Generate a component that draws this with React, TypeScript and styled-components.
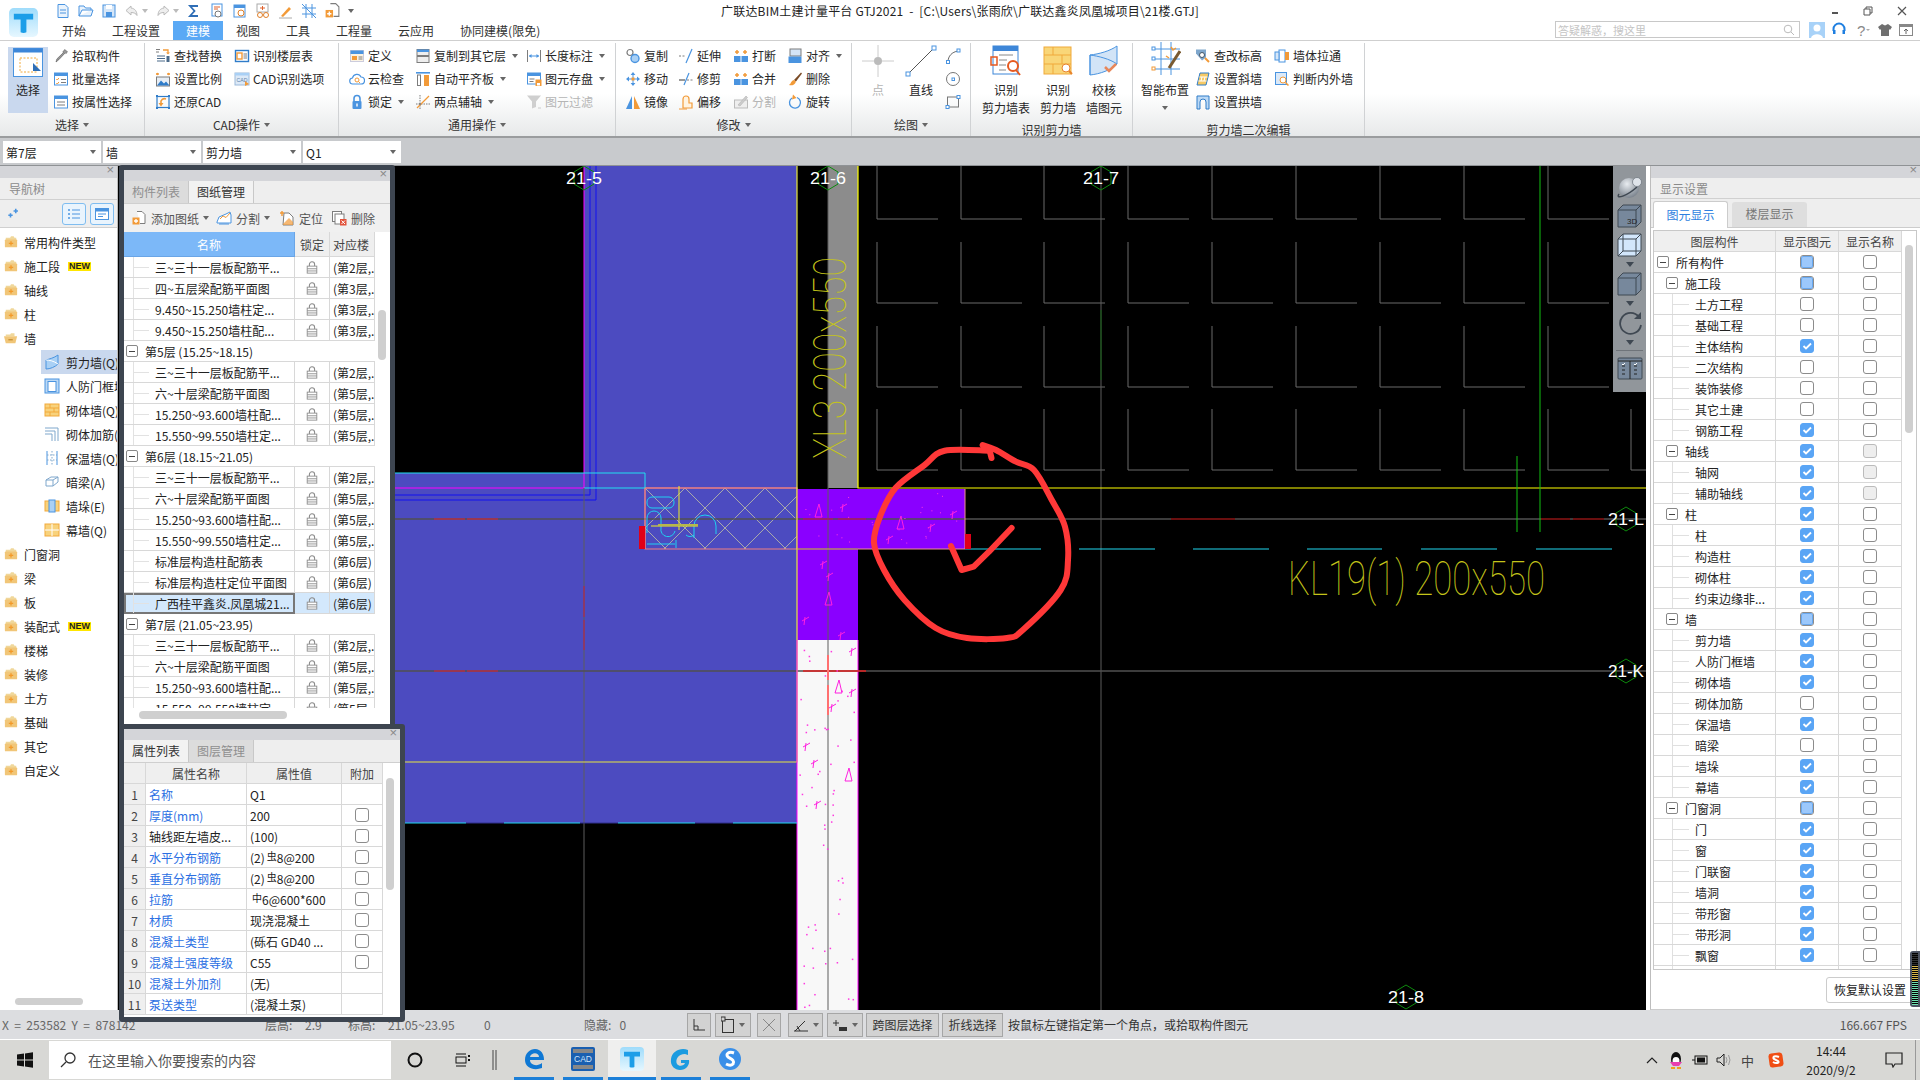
import React from "react";
import styled, { createGlobalStyle } from "styled-components";

const FONT = `"Noto Sans CJK SC", "Noto Sans", sans-serif`;

const Global = createGlobalStyle`
  html, body { margin: 0; padding: 0; width: 1920px; height: 1080px; overflow: hidden; background: #fff; }
  body { font-family: ${FONT}; font-size: 12px; color: #222; }
  * { box-sizing: border-box; }
`;

/* ---------- icons ---------- */
const B = "#4a94e0", O = "#f29a38", G = "#7d7d7d", LB = "#a9d0f5";
const ICONS: Record<string, React.ReactNode> = {
  pick: <path d="M12 1.5l2.5 2.5-1.6 1.6-.7-.7-6.4 6.8L3 14l.9-3.1 6.5-6.3-.7-.8z" fill="#999" stroke="#555" strokeWidth=".6" />,
  batch: <><rect x="1.5" y="2" width="13" height="12" fill="#fff" stroke={B} /><rect x="1.5" y="2" width="13" height="3" fill={B} /><path d="M3.3 8l1 1 1.6-2M3.3 12l1 1 1.6-2" stroke={O} fill="none" /><path d="M8 8.5h5M8 11.5h5" stroke={G} /></>,
  attr: <><rect x="1.5" y="2" width="13" height="12" fill="#fff" stroke={B} /><rect x="1.5" y="2" width="13" height="3" fill={B} /><path d="M4 8h8M4 11h8" stroke={G} /></>,
  find: <><path d="M1 1.5h4M1 4h3" stroke={G} /><path d="M8 2h5v3" stroke={O} fill="none" strokeWidth="1.3" /><path d="M11 4.5l2 2 2-2z" fill={O} /><path d="M2 8h8M2 10.5h8M2 13h8" stroke="#4a6a8a" strokeWidth="1.2" /><rect x="11.5" y="8" width="3" height="6" fill="#4a6a8a" /></>,
  floorT: <><rect x="1.5" y="2.5" width="13" height="11" fill="#fff" stroke="#2f7cc9" strokeWidth="1.4" /><rect x="3" y="5" width="5" height="6" fill="none" stroke={O} strokeWidth="1.4" /><path d="M9.5 6h3.5M9.5 8h3.5M9.5 10h3.5" stroke={G} /></>,
  scale: <><path d="M1 3h3M12 3h3" stroke={O} strokeWidth="1.5" /><path d="M1 3l2-1.5v3zM15 3l-2-1.5v3z" fill={O} /><rect x="1.5" y="6" width="13" height="9" fill="#e7eef6" stroke={G} /><path d="M2 14.5l4-5 3 3 2-2 3.5 4z" fill="#2f7cc9" /></>,
  cadOpt: <><rect x="1" y="2" width="14" height="12" fill="#dce9f7" stroke="#9bb9da" /><rect x="1" y="2" width="14" height="2.5" fill={LB} /><text x="8" y="11" fontSize="5.2" textAnchor="middle" fill="#5a7fa8" fontFamily="Liberation Sans">CAD</text><path d="M11 10l4 3-4 2z" fill={O} /></>,
  restore: <><rect x="2" y="2.5" width="12" height="11" fill="none" stroke="#2f7cc9" strokeWidth="1.2" /><path d="M1 1h2v2H1zM13 1h2v2h-2zM1 13h2v2H1zM13 13h2v2h-2z" fill="#2f7cc9" /><path d="M11 5a4 4 0 0 0-5 2l0 4" stroke={O} fill="none" strokeWidth="1.6" /><path d="M3.5 9h5l-2.5 3.5z" fill={O} /></>,
  define: <><rect x="1.5" y="2.5" width="13" height="11" fill="#fbf3e3" stroke="#ccd" /><rect x="1.5" y="2.5" width="13" height="3.5" fill={B} /><rect x="3" y="8" width="5" height="4" fill={O} /><path d="M9.5 9h4M9.5 11h4" stroke={G} /></>,
  cloud: <><path d="M4 13a3 3 0 0 1-.5-6A4.5 4.5 0 0 1 12 6a3.5 3.5 0 0 1 0 7z" fill="#fff" stroke={B} strokeWidth="1.2" /><circle cx="8" cy="9" r="2" fill="none" stroke={O} /><path d="M9.5 10.5l1.5 1.5" stroke={O} /></>,
  lock: <><path d="M5 7V4.5a3 3 0 0 1 6 0V7" fill="none" stroke={B} strokeWidth="1.6" /><rect x="3.5" y="7" width="9" height="8" rx="1" fill={B} /><rect x="7.3" y="9.5" width="1.4" height="3" fill="#fff" /></>,
  copyL: <><rect x="2" y="1.5" width="12" height="6" fill="#eee" stroke={G} /><rect x="2" y="1.5" width="12" height="2.5" fill={B} /><rect x="2" y="8.5" width="12" height="6" fill="#eee" stroke={G} /></>,
  level: <><rect x="1" y="1" width="14" height="1.6" fill={B} /><rect x="2.5" y="4" width="3" height="10.5" fill="#fff" stroke={G} /><rect x="9" y="4" width="5" height="11" fill={O} /></>,
  twoPt: <><path d="M5 1v14M1 10h14" stroke={G} strokeDasharray="1.5 1" /><path d="M2 14L14 2" stroke={O} strokeWidth="1.3" /><circle cx="5" cy="10" r="1" fill={G} /></>,
  dim: <><path d="M1.5 2v12M14.5 2v12" stroke={G} /><path d="M3 8h10" stroke={B} /><path d="M3 8l2.5-2v4zM13 8l-2.5-2v4z" fill={B} /></>,
  store: <><rect x="1.5" y="2" width="13" height="11" fill="#fff" stroke={B} /><rect x="1.5" y="2" width="13" height="3" fill={B} /><path d="M3.5 8h5M3.5 10.5h4" stroke={G} /><rect x="9.5" y="8.5" width="6" height="6.5" fill={O} /><rect x="11" y="12" width="3" height="2.5" fill="#fff" /></>,
  filter: <><path d="M1 1.5h14l-5 6V13l-4 1.5V7.5z" fill="#cfcfcf" /><path d="M12 14h3" stroke="#ccc" /></>,
  copy: <><circle cx="5" cy="4.5" r="3" fill="#fff" stroke={G} strokeWidth="1.2" /><circle cx="10" cy="10.5" r="4" fill={LB} stroke={B} strokeWidth="1.4" /></>,
  move: <><path d="M8 1l2.4 3H5.600zM8 15l2.4-3H5.600zM1 8l3-2.400v4.800zM15 8l-3-2.400v4.800z" fill={B} /><path d="M8 4v8M4 8h8" stroke={B} /><rect x="6.500" y="6.500" width="3" height="3" fill={O} /></>,
  mirror: <><path d="M7 2v13H1z" fill={B} /><path d="M9 2v13h6z" fill={O} /></>,
  extend: <><path d="M1 8h7" stroke={G} strokeDasharray="2 1.500" /><path d="M14 1L8 15" stroke={B} strokeWidth="1.200" /></>,
  trim: <><path d="M1 9h6" stroke="#333" /><path d="M9 9h6" stroke={G} strokeDasharray="2 1.500" /><path d="M11 2L6 14" stroke={B} strokeWidth="1.200" /></>,
  offset: <><path d="M5 14V5a3 3 0 0 1 6 0v4h3v5z" fill="#fff4e2" stroke={O} strokeWidth="1.200" /><path d="M1 15h8" stroke={O} /></>,
  breakI: <><rect x="1" y="8" width="6.500" height="6" fill={B} /><rect x="8.500" y="8" width="6.500" height="6" fill={B} /><path d="M4 2v4M2 4h4M12 2v4M10 4h4" stroke={O} strokeWidth="1.500" /></>,
  merge: <><rect x="1" y="8" width="14" height="6" fill={B} /><path d="M8 8v6" stroke="#cfe3f7" /><path d="M4 2v4M2 4h4M12 2v4M10 4h4" stroke={O} strokeWidth="1.500" /></>,
  split: <><rect x="1.500" y="6" width="13" height="8" fill="#eee" stroke="#bbb" /><path d="M5 11L13 2l1.500 1.500L7 12z" fill="#ccc" stroke="#aaa" strokeWidth=".5" /></>,
  align: <><rect x="3" y="1" width="11" height="7" fill="#d4e4f6" stroke={G} /><rect x="1.500" y="8.500" width="13" height="6.500" fill={B} /></>,
  del: <><path d="M14 1.500l-7 7.500 2 1.500 6-8z" fill="#7a4a25" /><path d="M7 9c-2 .5-3 2-3.500 3.500L2 14c2.500 1 6 0 7-3.500z" fill={O} /></>,
  rotate: <><path d="M10 3.500A5.500 5.500 0 1 1 5 4" fill="none" stroke={B} strokeWidth="1.300" /><path d="M6 .5L9.500 4 5 5.500z" fill={O} /></>,
  arc: <><path d="M3 14c0-6 4-10 10-11" fill="none" stroke="#666" /><rect x="1.500" y="12.500" width="3" height="3" fill="#fff" stroke={B} /><rect x="12" y="1" width="3" height="3" fill="#fff" stroke={B} /></>,
  circ: <><circle cx="8" cy="8" r="6.500" fill="#fff" stroke="#777" /><rect x="7" y="7" width="2.500" height="2.500" fill="#fff" stroke={B} /></>,
  rect2: <><rect x="2.500" y="3" width="11" height="10" fill="none" stroke="#777" /><rect x="1" y="11.500" width="3" height="3" fill="#fff" stroke={B} /><rect x="12" y="1.500" width="3" height="3" fill="#fff" stroke={B} /></>,
  changeH: <><path d="M1 1.500h10v8l-4 3-6-7z" fill="#7fa7cc" /><circle cx="7" cy="7" r="2.500" fill="#fff" stroke="#456" /><path d="M10 10l4 4" stroke={O} strokeWidth="2" /></>,
  slope: <><path d="M5 2h9l-3 12H2z" fill="#f6c964" stroke="#2f7cc9" /><path d="M4.500 6h8M3.500 10h8M7 6l-1 4M10 6l-1 4" stroke="#fff" /></>,
  archW: <><path d="M2 15V2h12v13h-3V8a3 3 0 0 0-6 0v7z" fill="#bcd9f5" stroke="#2f7cc9" /></>,
  pull: <><rect x="5" y="2" width="6" height="12" fill="#fff" stroke={B} /><rect x="1" y="4" width="4" height="8" fill="#d5e6f8" stroke={B} /><rect x="11" y="4" width="4" height="8" fill={O} /></>,
  inOut: <><rect x="1.500" y="1.500" width="11" height="12" fill="#dbe9f8" stroke={B} /><circle cx="9" cy="9" r="3" fill="#fff" stroke={O} /><path d="M11.500 11.500l3 3" stroke={O} strokeWidth="1.500" /></>,
  add: <><path d="M6 1.500h5l3 3v9H9" fill="#fff" stroke={G} /><rect x="1.500" y="7.500" width="7" height="7" fill={O} /><path d="M5 9v4M3 11h4" stroke="#fff" strokeWidth="1.300" /></>,
  cut: <><path d="M1 12l2-5 7-3 4-2 1 3v8H1z" fill="#fff" stroke={B} /><path d="M4 9l3-3 3 1.500L14 3" stroke={O} fill="none" /><path d="M3 14h10" stroke={B} /></>,
  locate: <><path d="M5 3h5l4 4v8H4z" fill="#fff" stroke={G} /><path d="M4 14l6-6 4 4v3H4z" fill={O} opacity=".7" /><path d="M3 1v5M1 3h4" stroke={O} strokeWidth="1.400" /></>,
  remove: <><rect x="1.500" y="1.500" width="9" height="10" fill="#fff" stroke={G} /><rect x="4" y="4" width="9" height="10" fill="#fff" stroke={G} /><rect x="9" y="9" width="6.500" height="6.500" fill="#e2533c" /><path d="M10.500 10.500l3.500 3.500M14 10.500L10.500 14" stroke="#fff" /></>,
  padlock: <><path d="M5 7V5a3 3 0 0 1 6 0v2" fill="none" stroke="#8a8a8a" strokeWidth="1.200" /><rect x="2.500" y="7" width="11" height="8" fill="#fff" stroke="#8a8a8a" /><path d="M2.500 10h11M2.500 12.500h11" stroke="#8a8a8a" /></>,
  folder: <><path d="M2 3h5l1-1.500h3L12 3h2v3H2z" fill="#f0d79a" /><rect x="1" y="5" width="14" height="9" rx="1" fill="#f1c678" /><path d="M8 7v5M5.500 9.500h5" stroke="#f39a2a" strokeWidth="1.500" /></>,
  folderOpen: <><path d="M2 4h5l1-1.500h4V6H2z" fill="#f0d79a" /><path d="M0 6h15l-2 8H2z" fill="#f1c678" /><path d="M5 10h5" stroke="#c58f34" strokeWidth="1.500" /></>,
  wall: <><path d="M2 6c3-1 8-2 12-5v9c-3 3-8 5-12 5z" fill={LB} stroke={B} /><path d="M2 6c3 0 8 1 12 4" fill="none" stroke="#fff" /></>,
  door: <><rect x="1" y="1" width="14" height="14" fill="#bcd9f5" stroke={B} /><rect x="4" y="3.500" width="8" height="10" fill="#fff" stroke={B} /></>,
  brick: <><rect x="1" y="2" width="14" height="12" fill="#f8d27c" stroke="#f2a93b" /><path d="M1 6h14M1 10h14M6 2v4M10 6v4M6 10v4" stroke="#f2a93b" /></>,
  rebar: <><path d="M1 2h13v13M1 5h10v10M1 8h7v7" fill="none" stroke="#7fa7cc" /></>,
  insul: <><path d="M3 1v14M13 1v14" stroke={B} /><path d="M8 1v14M3 5h10M3 10h10" stroke="#7fa7cc" strokeDasharray="1.500 1.500" /></>,
  beam: <><path d="M2 6l5-3h7v5l-5 4H2z" fill="#fff" stroke="#7fa7cc" /><path d="M2 6h7l5-3M9 6v6" fill="none" stroke="#7fa7cc" /></>,
  pier: <><rect x="1" y="3" width="14" height="10" fill="#f8d27c" stroke="#f2a93b" /><rect x="5" y="2" width="6" height="12" fill={LB} stroke={B} /></>,
  curtain: <><rect x="1" y="2" width="14" height="12" fill="#f8d27c" stroke="#f2a93b" /><path d="M1 8h14M8 2v12" stroke="#fff" /></>,
  spark: <><path d="M10 2v5M7.500 4.500h5M4 7v5M1.500 9.500h5" stroke={B} strokeWidth="1.800" /></>,
  listV: <><path d="M6 4h8M6 8h8M6 12h8" stroke={B} /><path d="M2 4h2M2 8h2M2 12h2" stroke={B} strokeWidth="1.600" /></>,
  formV: <><rect x="1.500" y="2.500" width="13" height="11" fill="#fff" stroke={B} /><rect x="1.500" y="2.500" width="13" height="3" fill={B} /><path d="M4 8h8M4 10.500h5" stroke={B} /></>,
};
const Svg = styled.svg`
  flex: none;
  display: block;
`;
const Ico = ({ n, s = 16 }: { n: string; s?: number }) => (
  <Svg width={s} height={s} viewBox="0 0 16 16">{ICONS[n]}</Svg>
);

/* ---------- layout ---------- */
const Screen = styled.div`
  width: 1920px;
  height: 1080px;
  display: flex;
  flex-direction: column;
  overflow: hidden;
  position: relative;
`;
const Header = styled.header`
  height: 41px;
  display: flex;
  background: #fff;
  border-bottom: 1px solid #cfcfcf;
  flex: none;
`;
const LogoCell = styled.div`
  width: 49px;
  padding: 8px 0 0 9px;
`;
const HeaderMain = styled.div`
  flex: 1;
  display: flex;
  flex-direction: column;
`;
const TopRow = styled.div`
  height: 21px;
  display: flex;
  align-items: center;
`;
const Quick = styled.div`
  width: 672px;
  display: flex;
  align-items: center;
  padding-left: 6px;
  gap: 7px;
`;
const Title = styled.div`
  flex: 1;
  font-size: 12px;
  color: #222;
  white-space: pre;
  letter-spacing: 0.2px;
`;
const WinBtns = styled.div`
  display: flex;
  align-items: center;
  gap: 24px;
  padding-right: 13px;
`;
const TabRow = styled.div`
  height: 19px;
  display: flex;
  align-items: stretch;
`;
const Tab = styled.div<{ $on?: boolean }>`
  padding: 0 13px;
  line-height: 19px;
  font-size: 12px;
  color: ${(p) => (p.$on ? "#fff" : "#333")};
  background: ${(p) => (p.$on ? "#5aa9f5" : "transparent")};
`;
const TabRight = styled.div`
  margin-left: auto;
  display: flex;
  align-items: center;
  padding: 0 7px 2px 0;
`;
const SearchBox = styled.div`
  width: 245px;
  height: 17px;
  border: 1px solid #c8c8c8;
  display: flex;
  align-items: center;
  justify-content: space-between;
  padding: 0 5px 0 2px;
  font-size: 11px;
  color: #c4c4c4;
  margin-right: 9px;
`;
const HeadIcons = styled.div`
  display: flex;
  align-items: center;
  gap: 6px;
`;
const Ribbon = styled.div`
  height: 97px;
  flex: none;
  display: flex;
  background: linear-gradient(#fff 55%, #e7e9ea);
  border-bottom: 2px solid #9a9c9e;
`;
const Group = styled.section<{ $w: number; $pl: number }>`
  width: ${(p) => p.$w}px;
  padding-left: ${(p) => p.$pl}px;
  border-right: 1px solid #d0d2d4;
  display: flex;
  flex-direction: column;
  flex: none;
  margin-top: 2px;
`;
const GroupBody = styled.div`
  flex: 1;
  display: flex;
  padding-top: 1px;
`;
const GroupLabel = styled.div<{ $shift?: number; $low?: boolean }>`
  height: 21px;
  margin-bottom: 1px;
  padding-top: ${(p) => (p.$low ? "4px" : "0")};
  display: flex;
  align-items: center;
  justify-content: center;
  gap: 4px;
  font-size: 12px;
  color: #333;
  margin-left: ${(p) => -(p.$shift ?? 0)}px;
`;
const Caret = styled.i<{ $c?: string; $s?: number }>`
  display: inline-block;
  border-left: ${(p) => p.$s ?? 3}px solid transparent;
  border-right: ${(p) => p.$s ?? 3}px solid transparent;
  border-top: ${(p) => (p.$s ?? 3) + 1}px solid ${(p) => p.$c ?? "#666"};
  flex: none;
`;
const QuickCaret = styled(Caret)`
  margin-left: -5px;
`;
const Col = styled.div<{ $w?: number; $ml?: number }>`
  width: ${(p) => (p.$w ? `${p.$w}px` : "auto")};
  margin-left: ${(p) => p.$ml ?? 0}px;
  display: flex;
  flex-direction: column;
  flex: none;
`;
const Item = styled.div<{ $off?: boolean }>`
  height: 23px;
  display: flex;
  align-items: center;
  gap: 3px;
  font-size: 12px;
  color: ${(p) => (p.$off ? "#b5b5b5" : "#262626")};
  white-space: nowrap;
  i { margin-left: 3px; }
`;
const Big = styled.div<{ $w: number; $on?: boolean; $off?: boolean; $ml?: number }>`
  width: ${(p) => p.$w}px;
  margin-left: ${(p) => p.$ml ?? 0}px;
  display: flex;
  flex-direction: column;
  align-items: center;
  background: ${(p) => (p.$on ? "#c9d8ee" : "transparent")};
  color: ${(p) => (p.$off ? "#b5b5b5" : "#262626")};
  height: ${(p) => (p.$on ? "66px" : "auto")};
  margin-top: ${(p) => (p.$on ? "3px" : "-1px")};
  flex: none;
`;
const BigIcon = styled.div<{ $h?: number }>`
  height: ${(p) => p.$h ?? 38}px;
  display: flex;
  align-items: flex-end;
  justify-content: center;
  padding-bottom: 4px;
`;
const BigText = styled.div`
  height: 18px;
  line-height: 17px;
  font-size: 12px;
  white-space: nowrap;
  text-align: center;
`;
const BigCaret = styled.div`
  height: 18px;
  display: flex;
  align-items: center;
  justify-content: center;
`;

const Toolbar = styled.div`
  height: 28px;
  flex: none;
  display: flex;
  gap: 2px;
  padding: 3px 0 0 3px;
  background: #c8cacd;
  border-bottom: 1px solid #8f9295;
`;
const Combo = styled.div`
  width: 98px;
  height: 22px;
  background: #fff;
  display: flex;
  align-items: center;
  justify-content: space-between;
  padding: 0 5px 0 3px;
  font-size: 12px;
`;

const Main = styled.main`
  height: 844px;
  display: flex;
  flex: none;
`;

/* ---------- nav ---------- */
const Nav = styled.nav`
  width: 118px;
  flex: none;
  background: #fff;
  border-right: 1px solid #bbb;
  display: flex;
  flex-direction: column;
  position: relative;
  overflow: hidden;
`;
const BarStrip = styled.div`
  height: 12px;
  background: #d4d5d9;
  position: relative;
  flex: none;
  &::after {
    content: "×";
    position: absolute;
    right: 3px;
    top: -4px;
    font: 13px/16px "Liberation Sans", sans-serif;
    color: #888;
  }
`;
const PaneTitle = styled.div<{ $h?: number }>`
  height: ${(p) => p.$h ?? 22}px;
  line-height: 21px;
  background: #eeeeee;
  color: #8a8a8a;
  font-size: 12px;
  padding-left: 9px;
  border-bottom: 1px solid #d0d0d0;
  flex: none;
`;
const NavTools = styled.div`
  height: 28px;
  background: #eee;
  border-bottom: 1px solid #d0d0d0;
  display: flex;
  align-items: center;
  gap: 4px;
  padding-left: 7px;
  flex: none;
`;
const NavToolBtn = styled.div<{ $first?: boolean }>`
  width: 24px;
  height: 22px;
  margin-left: ${(p) => (p.$first ? "37px" : "0")};
  border: 1px solid #7fbdf0;
  border-radius: 3px;
  background: #e9f4fd;
  display: flex;
  align-items: center;
  justify-content: center;
`;
const NavList = styled.div`
  padding-top: 2px;
`;
const NavRow = styled.div<{ $child?: boolean; $on?: boolean }>`
  height: 24px;
  display: flex;
  align-items: center;
  gap: 6px;
  padding-left: ${(p) => (p.$child ? "44px" : "4px")};
  white-space: nowrap;
  font-size: 12px;
  background: ${(p) => (p.$on ? "linear-gradient(90deg, transparent 41px, #c9d8ee 41px)" : "transparent")};
`;
const NewTag = styled.span`
  background: #ffe600;
  color: #222;
  font: 700 9px/9px "Liberation Sans", sans-serif;
  margin-left: 2px;
  padding: 0 1px;
`;
const NavScroll = styled.div`
  position: absolute;
  left: 15px;
  bottom: 5px;
  width: 68px;
  height: 7px;
  border-radius: 4px;
  background: #cfcfcf;
`;

/* ---------- workspace ---------- */
const Workspace = styled.div`
  width: 1528px;
  flex: none;
  position: relative;
  background: #000;
`;
const CanvasSvg = styled.svg`
  display: block;
  width: 1528px;
  height: 844px;
`;
const Floating = styled.div<{ $l: number; $t: number; $w: number; $h: number }>`
  position: absolute;
  left: ${(p) => p.$l}px;
  top: ${(p) => p.$t}px;
  width: ${(p) => p.$w}px;
  height: ${(p) => p.$h}px;
  border: 5px solid #3d4550;
  border-radius: 3px;
  background: #fff;
  display: flex;
  flex-direction: column;
  z-index: 3;
`;
const PanelBar = styled(BarStrip)`
  height: 11px;
`;
const PanelTabs = styled.div`
  height: 23px;
  background: #eee;
  display: flex;
  border-bottom: 1px solid #cfcfcf;
  flex: none;
`;
const PanelTab = styled.div<{ $on?: boolean }>`
  width: 65px;
  text-align: center;
  line-height: 22px;
  font-size: 12px;
  color: ${(p) => (p.$on ? "#333" : "#8f8f8f")};
  background: ${(p) => (p.$on ? "#f2f2f2" : "#dcdcdc")};
  border-right: 1px solid #c8c8c8;
`;
const PanelTools = styled.div`
  height: 28px;
  background: #f0f0f0;
  display: flex;
  align-items: center;
  color: #555;
  font-size: 12px;
  padding-left: 7px;
  flex: none;
`;
const PanelTool = styled.div<{ $w: number }>`
  width: ${(p) => p.$w}px;
  display: flex;
  align-items: center;
  gap: 4px;
  flex: none;
  white-space: nowrap;
`;
const TableArea = styled.div<{ $h: number }>`
  height: ${(p) => p.$h}px;
  display: flex;
  flex: none;
  overflow: hidden;
`;
const TableCol = styled.div<{ $w: number }>`
  width: ${(p) => p.$w}px;
  flex: none;
  overflow: hidden;
`;
const Track = styled.div<{ $pt: number; $h: number }>`
  flex: 1;
  padding: ${(p) => p.$pt}px 0 0 3px;
  &::after {
    content: "";
    display: block;
    width: 8px;
    height: ${(p) => p.$h}px;
    border-radius: 4px;
    background: #cfcfcf;
  }
`;
const Row = styled.div<{ $cols: string; $h?: number; $bg?: string }>`
  display: grid;
  grid-template-columns: ${(p) => p.$cols};
  height: ${(p) => p.$h ?? 21}px;
  background: ${(p) => p.$bg ?? "#fff"};
  font-size: 12px;
  color: #222;
  white-space: nowrap;
`;
const Cell = styled.div<{ $c?: boolean; $link?: boolean; $off?: boolean; $head?: boolean; $sel?: boolean }>`
  display: flex;
  align-items: center;
  justify-content: ${(p) => (p.$c ? "center" : "flex-start")};
  padding: ${(p) => (p.$c ? "0" : "0 3px")};
  overflow: hidden;
  border-right: 1px solid #d8d8d8;
  border-bottom: 1px solid #d8d8d8;
  color: ${(p) => (p.$link ? "#2b6fe3" : p.$head ? "#444" : "#222")};
  background: ${(p) => (p.$head ? "#efefef" : p.$sel ? "#d3e8fc" : "transparent")};
`;
const HeadBlue = styled(Cell)`
  background: #7cb8f8;
  color: #fff;
  border-color: #6aa5e6;
`;
const NameCell = styled(Cell)`
  padding-left: 31px;
  position: relative;
  &::before {
    content: "";
    position: absolute;
    left: 9px;
    top: 10px;
    width: 16px;
    border-top: 1px solid #e2e2e2;
  }
  &::after {
    content: "";
    position: absolute;
    left: 9px;
    top: 0;
    height: 100%;
    border-left: 1px solid #e2e2e2;
  }
`;
const SelName = styled(NameCell)`
  outline: 2px solid #777;
  outline-offset: -2px;
  background: #d3e8fc;
`;
const GroupCell = styled.div`
  grid-column: 1 / -1;
  display: flex;
  align-items: center;
  gap: 7px;
  padding-left: 2px;
  border-bottom: 1px solid #d8d8d8;
`;
const Minus = styled.span`
  width: 12px;
  height: 12px;
  border: 1px solid #888;
  border-radius: 2px;
  background: #fff;
  display: inline-flex;
  align-items: center;
  justify-content: center;
  flex: none;
  position: relative;
  z-index: 1;
  &::after {
    content: "";
    width: 6px;
    border-top: 1px solid #444;
  }
`;
const HScroll = styled.div`
  width: 148px;
  height: 8px;
  border-radius: 4px;
  background: #cfcfcf;
  margin: 3px 0 0 15px;
`;
const Rebar = styled.span`
  font-size: 10px;
  vertical-align: 3px;
  margin: 0 0 0 2px;
`;
const Box = styled.span<{ $state?: string }>`
  width: 14px;
  height: 14px;
  border-radius: 3px;
  display: inline-flex;
  align-items: center;
  justify-content: center;
  border: 1px solid ${(p) => (p.$state === "on" ? "#5aa5f5" : p.$state === "dis" ? "#bbb" : "#8c8c8c")};
  background: ${(p) => (p.$state === "on" ? "#5aa5f5" : p.$state === "dis" ? "#eeeeee" : "#fff")};
  flex: none;
  &::after {
    content: "";
    display: ${(p) => (p.$state === "half" ? "block" : "none")};
    width: 10px;
    height: 10px;
    border-radius: 2px;
    background: #9cc8fb;
    border: 1px solid #6aa9ef;
  }
`;
const Check = () => (
  <svg width="10" height="10" viewBox="0 0 10 10"><path d="M1.500 5l2.500 2.500 5-5" fill="none" stroke="#fff" strokeWidth="1.800" /></svg>
);
const CheckBox = ({ s }: { s?: string }) => <Box $state={s}>{s === "on" && <Check />}</Box>;

const ToolBox = styled.aside`
  position: absolute;
  right: 0;
  top: 0;
  width: 33px;
  height: 226px;
  background: #91969b;
  display: flex;
  flex-direction: column;
  align-items: center;
  padding-top: 9px;
  gap: 5px;
  z-index: 2;
`;
const ToolDivider = styled.div`
  width: 27px;
  border-top: 1px solid #6f747a;
`;

/* ---------- right ---------- */
const Right = styled.aside`
  width: 274px;
  flex: none;
  background: #fff;
  border-left: 4px solid #fff;
  display: flex;
  flex-direction: column;
  position: relative;
`;
const RightInner = styled.div`
  flex: 1;
  border-left: 1px solid #bdbdbd;
  border-bottom: 1px solid #ccc;
  display: flex;
  flex-direction: column;
`;
const DispTabs = styled.div`
  height: 29px;
  background: #eee;
  display: flex;
  align-items: flex-end;
  padding-left: 2px;
  gap: 4px;
  border-bottom: 1px solid #ccc;
  flex: none;
`;
const DispTab = styled.div<{ $on?: boolean }>`
  width: 75px;
  height: ${(p) => (p.$on ? "27px" : "25px")};
  line-height: ${(p) => (p.$on ? "26px" : "24px")};
  text-align: center;
  font-size: 12px;
  border-radius: 3px 3px 0 0;
  color: ${(p) => (p.$on ? "#2e7fe0" : "#777")};
  background: ${(p) => (p.$on ? "#fff" : "#dedede")};
  margin-bottom: ${(p) => (p.$on ? "-1px" : "0")};
  border: ${(p) => (p.$on ? "1px solid #ccc" : "none")};
  border-bottom: none;
`;
const DispWrap = styled.div`
  margin: 2px 0 0 2px;
  width: 264px;
  height: 740px;
  border: 1px solid #c8c8c8;
  display: flex;
  overflow: hidden;
  flex: none;
`;
const TreeCell = styled(Cell)<{ $lv: number }>`
  padding-left: ${(p) => (p.$lv === 0 ? 3 : p.$lv === 1 ? 12 : 41)}px;
  gap: 7px;
  position: relative;
  &::before {
    content: "";
    display: ${(p) => (p.$lv === 2 ? "block" : "none")};
    position: absolute;
    left: 18px;
    top: 10px;
    width: 17px;
    border-top: 1px solid #e0e0e0;
  }
  &::after {
    content: "";
    display: ${(p) => (p.$lv === 2 ? "block" : "none")};
    position: absolute;
    left: 18px;
    top: 0;
    height: 100%;
    border-left: 1px solid #e0e0e0;
  }
`;
const DispFoot = styled.div`
  flex: 1;
  display: flex;
  justify-content: flex-end;
  padding: 7px 6px 0 0;
`;
const ResetBtn = styled.div`
  width: 88px;
  height: 26px;
  line-height: 24px;
  text-align: center;
  background: #fff;
  border: 1px solid #ccc;
  border-radius: 3px;
  font-size: 12px;
`;
const Meter = styled.div`
  position: absolute;
  right: 0;
  bottom: 3px;
  width: 10px;
  height: 56px;
  background: #4d5463;
  border-radius: 3px 0 0 3px;
  padding: 2px;
  &::after {
    content: "";
    display: block;
    height: 100%;
    background: repeating-linear-gradient(#000 0 1px, transparent 1px 2px),
      linear-gradient(#333 0 25%, #d6b64a 25% 55%, #6ee0b0 55%);
  }
`;

/* ---------- status & taskbar ---------- */
const Status = styled.footer`
  height: 30px;
  flex: none;
  display: flex;
  align-items: center;
  background: #dcdde0;
  border-bottom: 1px solid #fff;
  font-size: 12px;
  color: #666;
  white-space: pre;
`;
const StatusText = styled.span<{ $w: number; $ml?: number; $dark?: boolean }>`
  width: ${(p) => p.$w}px;
  margin-left: ${(p) => p.$ml ?? 0}px;
  flex: none;
  color: ${(p) => (p.$dark ? "#333" : "#666")};
`;
const StatusBtn = styled.div<{ $w: number; $ml: number }>`
  width: ${(p) => p.$w}px;
  margin-left: ${(p) => p.$ml}px;
  height: 24px;
  flex: none;
  border: 1px solid #a6a6a6;
  background: #d2d2d2;
  display: flex;
  align-items: center;
  justify-content: center;
  gap: 4px;
  font-size: 12px;
  color: #333;
`;
const Fps = styled.span`
  margin-left: auto;
  padding-right: 13px;
  color: #555;
`;
const Taskbar = styled.div`
  height: 40px;
  flex: none;
  background: #d8d8d5;
  display: flex;
  align-items: center;
  position: relative;
`;
const WinStart = styled.div`
  width: 49px;
  display: flex;
  justify-content: center;
  flex: none;
`;
const TaskSearch = styled.div`
  width: 342px;
  height: 38px;
  background: #fff;
  display: flex;
  align-items: center;
  gap: 12px;
  padding-left: 11px;
  font-size: 14px;
  color: #555;
  flex: none;
`;
const TaskSlot = styled.div<{ $w: number; $ml?: number; $run?: boolean; $hot?: boolean }>`
  width: ${(p) => p.$w}px;
  margin-left: ${(p) => p.$ml ?? 0}px;
  height: 40px;
  flex: none;
  display: flex;
  align-items: center;
  justify-content: center;
  background: ${(p) => (p.$hot ? "#efefee" : "transparent")};
  border-bottom: ${(p) => (p.$run ? "3px solid #1c7fd8" : "none")};
`;
const Tray = styled.div`
  margin-left: auto;
  display: flex;
  align-items: center;
  height: 100%;
`;
const TrayIcon = styled.div<{ $w: number }>`
  width: ${(p) => p.$w}px;
  display: flex;
  justify-content: center;
  font-size: 13px;
  color: #444;
`;
const Clock = styled.div`
  width: 76px;
  text-align: center;
  font-size: 12px;
  line-height: 19px;
  color: #222;
`;
const Notify = styled.div`
  width: 44px;
  display: flex;
  justify-content: center;
  border-right: 1px solid #999;
  height: 100%;
  align-items: center;
`;

/* ---------- data ---------- */
const cols1 = "171px 35px 45px";
type Dr = { g?: string; n?: string; f?: string; sel?: boolean };
const r2 = "三~三十一层板配筋平...";
const r6 = "六~十层梁配筋平面图";
const r15a = "15.250~93.600墙柱配...";
const r15b = "15.550~99.550墙柱定...";
const draw: Dr[] = [
  { n: r2, f: "(第2层,.." },
  { n: "四~五层梁配筋平面图", f: "(第3层,.." },
  { n: "9.450~15.250墙柱定...", f: "(第3层,.." },
  { n: "9.450~15.250墙柱配...", f: "(第3层,.." },
  { g: "第5层 (15.25~18.15)" },
  { n: r2, f: "(第2层,.." },
  { n: r6, f: "(第5层,.." },
  { n: r15a, f: "(第5层,.." },
  { n: r15b, f: "(第5层,.." },
  { g: "第6层 (18.15~21.05)" },
  { n: r2, f: "(第2层,.." },
  { n: r6, f: "(第5层,.." },
  { n: r15a, f: "(第5层,.." },
  { n: r15b, f: "(第5层,.." },
  { n: "标准层构造柱配筋表", f: "(第6层)" },
  { n: "标准层构造柱定位平面图", f: "(第6层)" },
  { n: "广西桂平鑫炎.凤凰城21...", f: "(第6层)", sel: true },
  { g: "第7层 (21.05~23.95)" },
  { n: r2, f: "(第2层,.." },
  { n: r6, f: "(第5层,.." },
  { n: r15a, f: "(第5层,.." },
  { n: r15b, f: "(第5层,.." },
];
const props: { n: string; v: React.ReactNode; link: boolean; box: boolean }[] = [
  { n: "名称", v: "Q1", link: true, box: false },
  { n: "厚度(mm)", v: "200", link: true, box: true },
  { n: "轴线距左墙皮...", v: "(100)", link: false, box: true },
  { n: "水平分布钢筋", v: <span>(2)<Rebar>虫</Rebar>8@200</span>, link: true, box: true },
  { n: "垂直分布钢筋", v: <span>(2)<Rebar>虫</Rebar>8@200</span>, link: true, box: true },
  { n: "拉筋", v: <span><Rebar>中</Rebar>6@600*600</span>, link: true, box: true },
  { n: "材质", v: "现浇混凝土", link: true, box: true },
  { n: "混凝土类型", v: "(砾石 GD40 ...", link: true, box: true },
  { n: "混凝土强度等级", v: "C55", link: true, box: true },
  { n: "混凝土外加剂", v: "(无)", link: true, box: false },
  { n: "泵送类型", v: "(混凝土泵)", link: true, box: false },
];
const disp: [string, number, string, string?][] = [
  ["所有构件", 0, "half"], ["施工段", 1, "half"], ["土方工程", 2, ""], ["基础工程", 2, ""], ["主体结构", 2, "on"],
  ["二次结构", 2, ""], ["装饰装修", 2, ""], ["其它土建", 2, ""], ["钢筋工程", 2, "on"],
  ["轴线", 1, "on", "dis"], ["轴网", 2, "on", "dis"], ["辅助轴线", 2, "on", "dis"],
  ["柱", 1, "on"], ["柱", 2, "on"], ["构造柱", 2, "on"], ["砌体柱", 2, "on"], ["约束边缘非...", 2, "on"],
  ["墙", 1, "half"], ["剪力墙", 2, "on"], ["人防门框墙", 2, "on"], ["砌体墙", 2, "on"], ["砌体加筋", 2, ""],
  ["保温墙", 2, "on"], ["暗梁", 2, ""], ["墙垛", 2, "on"], ["幕墙", 2, "on"],
  ["门窗洞", 1, "half"], ["门", 2, "on"], ["窗", 2, "on"], ["门联窗", 2, "on"], ["墙洞", 2, "on"], ["带形窗", 2, "on"],
  ["带形洞", 2, "on"], ["飘窗", 2, "on"], ["", 2, ""],
];
const navItems: { t: string; open?: boolean; isNew?: boolean; child?: boolean; ic?: string; on?: boolean }[] = [
  { t: "常用构件类型" }, { t: "施工段", isNew: true }, { t: "轴线" }, { t: "柱" }, { t: "墙", open: true },
  { t: "剪力墙(Q)", child: true, ic: "wall", on: true }, { t: "人防门框墙(Q)", child: true, ic: "door" },
  { t: "砌体墙(Q)", child: true, ic: "brick" }, { t: "砌体加筋(L)", child: true, ic: "rebar" },
  { t: "保温墙(Q)", child: true, ic: "insul" }, { t: "暗梁(A)", child: true, ic: "beam" },
  { t: "墙垛(E)", child: true, ic: "pier" }, { t: "幕墙(Q)", child: true, ic: "curtain" },
  { t: "门窗洞" }, { t: "梁" }, { t: "板" }, { t: "装配式", isNew: true }, { t: "楼梯" }, { t: "装修" },
  { t: "土方" }, { t: "基础" }, { t: "其它" }, { t: "自定义" },
];

/* ---------- drawing data ---------- */
const Lx = [877, 961, 1044, 1128, 1212, 1296, 1380, 1464, 1548, 1631];
const Ly: [number, number][] = [[150, 219], [242, 303], [326, 387], [409, 470]];
const lPath = Ly.flatMap(([a, b]) => Lx.map((x) => `M${x} ${a}V${b}H${x + 61}`)).join("");
const rnd = (seed: number) => {
  let s = seed;
  return () => {
    s = (s * 9301 + 49297) % 233280;
    return s / 233280;
  };
};
const dots = (seed: number, n: number, x: number, y: number, w: number, h: number) => {
  const r = rnd(seed);
  return Array.from({ length: n }, () => [x + r() * w, y + r() * h]);
};
const whiteDots = dots(7, 60, 799, 642, 57, 368);
const purpleDots = dots(11, 26, 799, 491, 165, 57);
const tris: [number, number][] = [[819, 511], [901, 523], [829, 599], [839, 687], [849, 775]];
const ticks: [number, number][] = [[843, 508], [953, 515], [931, 528], [889, 540], [823, 565], [829, 577], [805, 621], [841, 636], [852, 652], [852, 693], [832, 708], [806, 747], [814, 764], [817, 805]];
const hexPts = (x: number, y: number) =>
  `${x},${y - 12} ${x + 10},${y - 6} ${x + 10},${y + 6} ${x},${y + 12} ${x - 10},${y + 6} ${x - 10},${y - 6}`;
const AXES: [string, number, number][] = [["21-5", 584, 178], ["21-6", 828, 178], ["21-7", 1101, 178], ["21-L", 1626, 519], ["21-K", 1626, 671], ["21-8", 1406, 997]];
const cyanDash = [[965, 1041], [1079, 1155], [1193, 1269], [1307, 1382], [1421, 1497], [1536, 1612]];
const redDash: [number, number, number, string][] = [
  [434, 465, 519, "#b0304a"], [467, 498, 519, "#b0304a"], [803, 833, 519, "#b01070"], [838, 866, 519, "#b01070"],
  [1171, 1204, 519, "#7a0000"], [1204, 1235, 519, "#7a0000"], [1541, 1570, 519, "#7a0000"], [1573, 1604, 519, "#7a0000"],
  [434, 465, 671, "#b0304a"], [467, 498, 671, "#b0304a"], [803, 866, 671, "#e02020"],
];
const smooth = (pts: [number, number][]) => {
  let d = `M${pts[0][0]} ${pts[0][1]}`;
  for (let i = 0; i < pts.length - 1; i++) {
    const p0 = pts[Math.max(i - 1, 0)], p1 = pts[i], p2 = pts[i + 1], p3 = pts[Math.min(i + 2, pts.length - 1)];
    d += `C${p1[0] + (p2[0] - p0[0]) / 6} ${p1[1] + (p2[1] - p0[1]) / 6} ${p2[0] - (p3[0] - p1[0]) / 6} ${p2[1] - (p3[1] - p1[1]) / 6} ${p2[0]} ${p2[1]}`;
  }
  return d;
};
const ringPath = smooth([
  [982.6, 445], [996, 450], [1016, 461.7], [1034, 470], [1051.8, 500], [1065, 526.7], [1068, 560], [1060.7, 590],
  [1022.8, 630], [1007, 638], [967, 638], [935.7, 628], [904.5, 600], [884, 570], [874, 543], [880, 516.7],
  [895.5, 488], [924.6, 465], [944.6, 450.7], [989, 450.7],
]);

const Canvas = () => (
  <CanvasSvg viewBox="118 166 1528 844">
    <defs>
      <pattern id="hatch" x="645" y="488" width="40" height="40" patternUnits="userSpaceOnUse">
        <path d="M0 0L40 40M40 0L0 40" stroke="#a9a9a9" strokeWidth="1" />
      </pattern>
    </defs>
    <rect x="118" y="166" width="1528" height="844" fill="#000" />
    <rect x="395" y="166" width="402" height="657" fill="#4c4bc0" />
    <rect x="395" y="166" width="189" height="307" fill="#000" />
    <rect x="828" y="166" width="30" height="322" fill="#8c8c8c" />
    <rect x="645" y="488" width="152" height="61" fill="url(#hatch)" stroke="#f08080" />
    <rect x="797" y="489" width="168" height="60" fill="#8a00ff" />
    <rect x="797" y="549" width="61" height="91" fill="#8a00ff" />
    <rect x="797" y="640" width="61" height="370" fill="#f8f8f8" />
    <path d={lPath} fill="none" stroke="#6a6a6a" strokeWidth="1" />
    <path d="M584 166V488M395 488H584" fill="none" stroke="#ff00ff" />
    <path d="M590 166V495H395M596 166V500H395" fill="none" stroke="#1010f0" />
    <path d="M395 473H645V488M584 488H645" fill="none" stroke="#20e0f0" />
    <path d="M584 488V1010M1101 166V1010M828 166V1010" fill="none" stroke="#5c5c5c" />
    <path d="M828 640V1010" stroke="#aaa" />
    <path d="M395 519H1646M395 671H1646" stroke="#505050" strokeWidth="1.500" />
    <path d="M1101 310V380" stroke="#0a5a0a" />
    <path d="M645 549V488M797 488H645" stroke="#f08080" fill="none" />
    <path d="M858 166V488H1646" fill="none" stroke="#ffff00" strokeWidth="1.200" />
    <path d="M797 166V762H395" fill="none" stroke="#e6e640" strokeWidth="1.200" />
    <path d="M858 549H965V489" fill="none" stroke="#f09090" />
    <path d="M797 549H858" stroke="#c8c820" />
    <path d="M797 640V1010M858 640V1010" stroke="#ff00ff" />
    <path d="M1540 166V532M1517 456V532" stroke="#12c012" />
    {redDash.map(([a, b, y, c], i) => <path key={i} d={`M${a} ${y}H${b}`} stroke={c} strokeWidth="1.500" />)}
    <path d="M584 586V617M584 620V650" stroke="#c02040" />
    <path d="M828 655V680M828 685V715" stroke="#ff7070" strokeWidth="2" />
    <path d="M405 823H466M504 823H580M618 823H695M733 823H797" stroke="#20d8f0" />
    <path d="M466 823H504M580 823H618M695 823H733" stroke="#30308c" />
    {cyanDash.map(([a, b]) => <path key={a} d={`M${a} 549H${b}`} stroke="#20d8f0" />)}
    <g fill="none" stroke="#20d0f0">
      <rect x="647" y="497" width="27" height="11" rx="5" />
      <path d="M647 533V518a7 7 0 0 1 14 0V528a7 7 0 0 0 14 3" />
      <path d="M694 538V526a6 6 0 0 1 22 0V534" />
      <path d="M694 535a6 6 0 0 1-8 0M647 544H675M676 540V548" />
    </g>
    <path d="M679 486V530M651 526H698" stroke="#f0f020" />
    <path d="M658 525H698" stroke="#b8b84a" strokeWidth="2" />
    <rect x="639" y="526" width="6" height="23" fill="#e00018" />
    <rect x="965" y="534" width="6" height="15" fill="#e00018" />
    <g fill="#ff38e0">
      {whiteDots.map(([x, y], i) => <rect key={i} x={x} y={y} width="1.500" height="1.500" />)}
      {purpleDots.map(([x, y], i) => <rect key={i} x={x} y={y} width="1" height="1" />)}
    </g>
    <g fill="none" stroke="#ff20e0">
      {tris.map(([x, y], i) => <path key={i} d={`M${x} ${y - 7}l3 13h-7z`} />)}
      {ticks.map(([x, y], i) => <path key={i} d={`M${x - 3} ${y}l7-4M${x} ${y - 4}l-1 8`} />)}
    </g>
    <text x="0" y="0" transform="translate(846 459) rotate(-90)" fontFamily="Roboto, sans-serif" fontWeight="100" fontSize="46" fill="#c4c41a" textLength="202" lengthAdjust="spacingAndGlyphs">XL3 200x550</text>
    <text x="1288" y="595" fontFamily="Roboto, sans-serif" fontWeight="100" fontSize="48" fill="#c4c41a" textLength="257" lengthAdjust="spacingAndGlyphs">KL19(1) 200x550</text>
    {AXES.map(([t, x, y]) => (
      <g key={t}>
        <polygon points={hexPts(x, y)} fill="none" stroke="#0d8a0d" />
        <text x={x} y={y + 6} textAnchor="middle" fontFamily="Liberation Sans, sans-serif" fontSize="17" fill="#fff" textLength="36" lengthAdjust="spacingAndGlyphs">{t}</text>
      </g>
    ))}
    <path d={ringPath} fill="none" stroke="#ff3838" strokeWidth="6" strokeLinecap="round" strokeLinejoin="round" />
    <path d="M991.500 458L989 448" fill="none" stroke="#ff3838" strokeWidth="6" strokeLinecap="round" />
    <path d="M951 546L961.600 570L973.700 566.700L989 551.700L1011.600 528" fill="none" stroke="#ff3838" strokeWidth="6" strokeLinecap="round" strokeLinejoin="round" />
  </CanvasSvg>
);

const CubeIc = ({ inner }: { inner?: React.ReactNode }) => (
  <svg width="26" height="24" viewBox="0 0 26 24">
    <path d="M1 6l5-5h18v17l-5 5H1z" fill="#77889c" stroke="#3f4852" />
    <path d="M1 6h18v17M19 6l5-5" fill="none" stroke="#3f4852" />
    {inner}
  </svg>
);

const BigSelect = () => (
  <svg width="30" height="29" viewBox="0 0 30 29">
    <rect x=".5" y=".5" width="29" height="28" fill="#fff" stroke="#4a94e0" />
    <rect x=".5" y=".5" width="29" height="4" fill="#3d86d8" />
    <rect x="7" y="10" width="17" height="14" fill="none" stroke="#f2a93b" strokeDasharray="2 1.500" />
    <path d="M20 15l8 8h-8z" fill="#2f6eb6" />
  </svg>
);
const BigPoint = () => (
  <svg width="32" height="32" viewBox="0 0 32 32"><path d="M16 0V12M16 20V32M0 16H12M20 16H32" stroke="#ccc" /><circle cx="16" cy="16" r="4" fill="#bbb" /></svg>
);
const BigLine = () => (
  <svg width="32" height="32" viewBox="0 0 32 32"><path d="M3 29L29 3" stroke="#555" /><rect x="27" y="1" width="4" height="4" fill="#fff" stroke="#4a94e0" /><rect x="1" y="27" width="4" height="4" fill="#fff" stroke="#4a94e0" /></svg>
);
const BigTable = () => (
  <svg width="32" height="32" viewBox="0 0 32 32"><rect x="3" y="1" width="25" height="28" fill="#fff" stroke="#3d86d8" /><rect x="3" y="1" width="25" height="5" fill="#3d86d8" /><path d="M9 10h14M9 15h8M9 20h7M9 25h7" stroke="#888" /><rect x="1" y="12" width="6" height="8" fill="none" stroke="#e65a20" strokeWidth="1.500" /><circle cx="23" cy="21" r="5" fill="#fff" stroke="#e65a20" strokeWidth="2" /><path d="M26 25l4 5" stroke="#e65a20" strokeWidth="2" /></svg>
);
const BigBrick = () => (
  <svg width="32" height="32" viewBox="0 0 32 32"><rect x="2" y="2" width="27" height="27" fill="#f9d678" stroke="#f0a93a" /><path d="M2 10h27M2 19h27M11 2v8M20 10v9M11 19v10" stroke="#f0a93a" /><circle cx="24" cy="23" r="4" fill="#fff" stroke="#e8822a" /><path d="M27 26l3 3" stroke="#e8822a" strokeWidth="2" /></svg>
);
const BigCheck = () => (
  <svg width="32" height="32" viewBox="0 0 32 32"><path d="M2 10c9-1 20-4 27-9v18c-6 6-17 10-27 11z" fill="#d2e4f7" stroke="#4a94e0" /><path d="M2 10c8 1 20 4 27 9M2 10v20" fill="none" stroke="#4a94e0" /><path d="M17 22l4 4 7-7" fill="none" stroke="#e8875a" strokeWidth="2.500" /></svg>
);
const BigSmart = () => (
  <svg width="32" height="36" viewBox="0 0 32 36"><path d="M5 8h26M5 18h26M5 28h26M12 1v33M22 1v33" stroke="#4a94e0" /><path d="M31 10L20 27" stroke="#7a5a30" strokeWidth="3" /><path d="M22 6l2 3 3-2M17 15l3 2" stroke="#f29a38" strokeWidth="1.500" fill="none" /><rect x="3" y="6" width="3" height="3" fill="#fff" stroke="#4a94e0" /><rect x="3" y="16" width="3" height="3" fill="#fff" stroke="#4a94e0" /><rect x="3" y="26" width="3" height="3" fill="#fff" stroke="#f29a38" /></svg>
);

const TLogo = ({ s }: { s: number }) => (
  <svg width={s} height={s} viewBox="0 0 30 30">
    <defs><linearGradient id={`lg${s}`} x1="0" y1="0" x2="0" y2="1"><stop offset="0" stopColor="#9fdcfb" /><stop offset="1" stopColor="#e6f7ff" /></linearGradient></defs>
    <rect width="30" height="30" rx="5" fill={`url(#lg${s})`} />
    <path d="M5 6h20v6h-7v13q-3 1.500-6 0V12H5z" fill="#1c9ee8" />
  </svg>
);

const Sm = ({ children, w = 16, h = 16 }: { children: React.ReactNode; w?: number; h?: number }) => (
  <svg width={w} height={h} viewBox={`0 0 ${w} ${h}`}>{children}</svg>
);

export default function App() {
  return (
    <Screen>
      <Global />
      <Header>
        <LogoCell><TLogo s={29} /></LogoCell>
        <HeaderMain>
          <TopRow>
            <Quick>
              <Sm><path d="M3 1.500h7l3 3v10H3z" fill="#eaf3fc" stroke="#4a94e0" /><path d="M5 7h6M5 10h6" stroke="#4a94e0" /></Sm>
              <Sm><path d="M1 13V3h5l1.500 2H13v2H4l-3 6h12l2-6H13" fill="#eaf3fc" stroke="#4a94e0" /></Sm>
              <Sm><rect x="2" y="2" width="12" height="12" fill="#d5e6f8" stroke="#4a94e0" /><rect x="5" y="2" width="6" height="4" fill="#fff" /><rect x="5" y="9" width="6" height="5" fill="#4a94e0" /></Sm>
              <Sm><path d="M7 3L2 7.500 7 12V9.500c3 0 5 1 6 3 0-4-2-7-6-7.500z" fill="#eee" stroke="#bbb" /></Sm>
              <QuickCaret $c="#bbb" />
              <Sm><path d="M9 3l5 4.500L9 12V9.500c-3 0-5 1-6 3 0-4 2-7 6-7.500z" fill="#eee" stroke="#bbb" /></Sm>
              <QuickCaret $c="#bbb" />
              <Sm><path d="M12 3H4l4.500 5L4 13h8" fill="none" stroke="#2f6eb6" strokeWidth="1.800" /></Sm>
              <Sm><rect x="3" y="1" width="10" height="12" fill="#fff" stroke="#4a94e0" /><path d="M5 4h6M5 6h4" stroke="#e0602a" /><circle cx="9" cy="11" r="3" fill="#fff" stroke="#777" /></Sm>
              <Sm><rect x="2" y="2" width="11" height="12" fill="#fff" stroke="#4a94e0" /><rect x="2" y="2" width="11" height="3" fill="#4a94e0" /><circle cx="9" cy="10" r="3" fill="#fff" stroke="#e0802a" /></Sm>
              <Sm><rect x="2" y="1" width="11" height="8" fill="#fff" stroke="#aaa" /><path d="M5 5h5M7.500 3v4" stroke="#e0602a" /><circle cx="5" cy="12" r="2.500" fill="none" stroke="#e0802a" /><circle cx="11" cy="12" r="2.500" fill="none" stroke="#e0802a" /></Sm>
              <Sm><path d="M3 13L11 4l2 2-8 8z" fill="#f29a38" /><path d="M1 15h13" stroke="#aaa" /></Sm>
              <Sm><path d="M1 5h14M1 11h14M5 1v14M11 1v14M1 1l14 14" stroke="#4a94e0" /></Sm>
              <Ico n="add" s={17} />
              <Caret $c="#666" />
            </Quick>
            <Title>广联达BIM土建计量平台 GTJ2021  -  [C:\Users\张雨欣\广联达鑫炎凤凰城项目\21楼.GTJ]</Title>
            <WinBtns>
              <Sm w={8} h={8}><path d="M1 6h6" stroke="#555" strokeWidth="2" /></Sm>
              <Sm w={10} h={10}><path d="M3 3V1h6v6H7M1 3h6v6H1z" fill="none" stroke="#555" /></Sm>
              <Sm w={10} h={10}><path d="M1 1l8 8M9 1l-8 8" stroke="#555" strokeWidth="1.200" /></Sm>
            </WinBtns>
          </TopRow>
          <TabRow>
            <Tab>开始</Tab><Tab>工程设置</Tab><Tab $on>建模</Tab><Tab>视图</Tab><Tab>工具</Tab><Tab>工程量</Tab><Tab>云应用</Tab><Tab>协同建模(限免)</Tab>
            <TabRight>
              <SearchBox>
                <span>答疑解惑，搜这里</span>
                <Sm w={11} h={11}><circle cx="5" cy="5" r="3.800" fill="none" stroke="#bbb" /><path d="M8 8l3 3" stroke="#bbb" /></Sm>
              </SearchBox>
              <HeadIcons>
                <Sm><rect width="16" height="16" fill="#a8d2f8" /><circle cx="8" cy="6" r="3.500" fill="#fff" /><path d="M2 16c1-5 11-5 12 0z" fill="#fff" /></Sm>
                <Sm><path d="M2.500 9V7a5.500 5.500 0 0 1 11 0v2" fill="none" stroke="#1f7fe0" strokeWidth="2" /><rect x="2" y="8" width="2.500" height="4" fill="#1f7fe0" /><rect x="11.500" y="8" width="2.500" height="4" fill="#1f7fe0" /></Sm>
                <Sm w={18}><text x="4" y="14" fontSize="15" fill="#888" fontFamily="Liberation Sans">?</text><path d="M13 7h4l-2 2z" fill="#aaa" /></Sm>
                <Sm><path d="M5 2L1 5l2 3 1-1v7h8V7l1 1 2-3-4-3-3 1.500z" fill="#6f6f6f" /></Sm>
                <Sm w={14}><rect x=".5" y="2.500" width="13" height="11" fill="#fff" stroke="#888" /><rect x=".5" y="2.500" width="13" height="2.500" fill="#888" /><path d="M7 12V7M5 9l2-2 2 2" fill="none" stroke="#666" /></Sm>
              </HeadIcons>
            </TabRight>
          </TabRow>
        </HeaderMain>
      </Header>

      <Ribbon>
        <Group $w={145} $pl={8}>
          <GroupBody>
            <Big $w={40} $on><BigIcon $h={34}><BigSelect /></BigIcon><BigText>选择</BigText></Big>
            <Col $ml={5}>
              <Item><Ico n="pick" />拾取构件</Item>
              <Item><Ico n="batch" />批量选择</Item>
              <Item><Ico n="attr" />按属性选择</Item>
            </Col>
          </GroupBody>
          <GroupLabel $shift={8}>选择<Caret /></GroupLabel>
        </Group>
        <Group $w={194} $pl={10}>
          <GroupBody>
            <Col $w={79}>
              <Item><Ico n="find" />查找替换</Item>
              <Item><Ico n="scale" />设置比例</Item>
              <Item><Ico n="restore" />还原CAD</Item>
            </Col>
            <Col>
              <Item><Ico n="floorT" />识别楼层表</Item>
              <Item><Ico n="cadOpt" />CAD识别选项</Item>
            </Col>
          </GroupBody>
          <GroupLabel $shift={10}>CAD操作<Caret /></GroupLabel>
        </Group>
        <Group $w={277} $pl={10}>
          <GroupBody>
            <Col $w={66}>
              <Item><Ico n="define" />定义</Item>
              <Item><Ico n="cloud" />云检查</Item>
              <Item><Ico n="lock" />锁定<Caret /></Item>
            </Col>
            <Col $w={111}>
              <Item><Ico n="copyL" />复制到其它层<Caret /></Item>
              <Item><Ico n="level" />自动平齐板<Caret /></Item>
              <Item><Ico n="twoPt" />两点辅轴<Caret /></Item>
            </Col>
            <Col>
              <Item><Ico n="dim" />长度标注<Caret /></Item>
              <Item><Ico n="store" />图元存盘<Caret /></Item>
              <Item $off><Ico n="filter" />图元过滤</Item>
            </Col>
          </GroupBody>
          <GroupLabel $shift={10}>通用操作<Caret /></GroupLabel>
        </Group>
        <Group $w={236} $pl={9}>
          <GroupBody>
            <Col $w={53}>
              <Item><Ico n="copy" />复制</Item>
              <Item><Ico n="move" />移动</Item>
              <Item><Ico n="mirror" />镜像</Item>
            </Col>
            <Col $w={55}>
              <Item><Ico n="extend" />延伸</Item>
              <Item><Ico n="trim" />修剪</Item>
              <Item><Ico n="offset" />偏移</Item>
            </Col>
            <Col $w={54}>
              <Item><Ico n="breakI" />打断</Item>
              <Item><Ico n="merge" />合并</Item>
              <Item $off><Ico n="split" />分割</Item>
            </Col>
            <Col>
              <Item><Ico n="align" />对齐<Caret /></Item>
              <Item><Ico n="del" />删除</Item>
              <Item><Ico n="rotate" />旋转</Item>
            </Col>
          </GroupBody>
          <GroupLabel $shift={9}>修改<Caret /></GroupLabel>
        </Group>
        <Group $w={119} $pl={11}>
          <GroupBody>
            <Big $w={30} $off><BigIcon><BigPoint /></BigIcon><BigText>点</BigText></Big>
            <Big $w={36} $ml={10}><BigIcon><BigLine /></BigIcon><BigText>直线</BigText></Big>
            <Col $ml={6}>
              <Item><Ico n="arc" /></Item>
              <Item><Ico n="circ" /></Item>
              <Item><Ico n="rect2" /></Item>
            </Col>
          </GroupBody>
          <GroupLabel $shift={11}>绘图<Caret /></GroupLabel>
        </Group>
        <Group $w={162} $pl={9}>
          <GroupBody>
            <Big $w={52}><BigIcon><BigTable /></BigIcon><BigText>识别</BigText><BigText>剪力墙表</BigText></Big>
            <Big $w={52}><BigIcon><BigBrick /></BigIcon><BigText>识别</BigText><BigText>剪力墙</BigText></Big>
            <Big $w={40}><BigIcon><BigCheck /></BigIcon><BigText>校核</BigText><BigText>墙图元</BigText></Big>
          </GroupBody>
          <GroupLabel $shift={9} $low>识别剪力墙</GroupLabel>
        </Group>
        <Group $w={232} $pl={8}>
          <GroupBody>
            <Big $w={48}><BigIcon><BigSmart /></BigIcon><BigText>智能布置</BigText><BigCaret><Caret /></BigCaret></Big>
            <Col $w={79} $ml={6}>
              <Item><Ico n="changeH" />查改标高</Item>
              <Item><Ico n="slope" />设置斜墙</Item>
              <Item><Ico n="archW" />设置拱墙</Item>
            </Col>
            <Col>
              <Item><Ico n="pull" />墙体拉通</Item>
              <Item><Ico n="inOut" />判断内外墙</Item>
            </Col>
          </GroupBody>
          <GroupLabel $shift={8} $low>剪力墙二次编辑</GroupLabel>
        </Group>
      </Ribbon>

      <Toolbar>
        {["第7层", "墙", "剪力墙", "Q1"].map((t) => (
          <Combo key={t}>{t}<Caret /></Combo>
        ))}
      </Toolbar>

      <Main>
        <Nav>
          <BarStrip />
          <PaneTitle>导航树</PaneTitle>
          <NavTools>
            <Ico n="spark" s={14} />
            <NavToolBtn $first><Ico n="listV" /></NavToolBtn>
            <NavToolBtn><Ico n="formV" /></NavToolBtn>
          </NavTools>
          <NavList>
            {navItems.map((it) => (
              <NavRow key={it.t} $child={it.child} $on={it.on}>
                <Ico n={it.child ? it.ic! : it.open ? "folderOpen" : "folder"} s={it.child ? 16 : 14} />
                <span>{it.t}</span>
                {it.isNew && <NewTag>NEW</NewTag>}
              </NavRow>
            ))}
          </NavList>
          <NavScroll />
        </Nav>

        <Workspace>
          <Canvas />
          <ToolBox>
            <svg width="26" height="24" viewBox="0 0 26 24">
              <defs><radialGradient id="sph" cx=".4" cy=".3" r=".8"><stop offset="0" stopColor="#e8ecf0" /><stop offset="1" stopColor="#6e7782" /></radialGradient></defs>
              <circle cx="12" cy="13" r="10" fill="url(#sph)" />
              <path d="M2 19C-2 25 10 21 20 12" fill="none" stroke="#3f4852" strokeWidth="1.500" />
              <circle cx="20" cy="7" r="4.500" fill="#dfe4ea" stroke="#59626c" strokeWidth=".6" />
            </svg>
            <CubeIc inner={<text x="10" y="20" fontSize="8" fill="#222" fontFamily="Liberation Sans">3D</text>} />
            <svg width="26" height="24" viewBox="0 0 26 24"><path d="M1 6l5-5h18v17l-5 5H1z" fill="#d2e6fb" stroke="#3f4852" /><path d="M1 6h18v17M19 6l5-5M6 1v17H24M6 18l-5 5" fill="none" stroke="#3f4852" /></svg>
            <Caret $c="#3f4852" $s={4} />
            <CubeIc />
            <Caret $c="#3f4852" $s={4} />
            <svg width="26" height="24" viewBox="0 0 26 24"><path d="M22 6A10.500 10.500 0 1 0 24 14" fill="none" stroke="#3f4852" strokeWidth="1.800" /><path d="M24 1v7h-7z" fill="#3f4852" /></svg>
            <Caret $c="#3f4852" $s={4} />
            <ToolDivider />
            <svg width="26" height="24" viewBox="0 0 26 24"><rect x="1" y="2" width="24" height="21" rx="1" fill="#77889c" stroke="#3f4852" /><path d="M1 5h24M13 5v18M5 10h3M5 14h3M5 18h3M17 10h3M17 14h3M17 18h3" stroke="#222" /><path d="M5 8l1 1 2-2M17 8l1 1 2-2" stroke="#fff" fill="none" /></svg>
          </ToolBox>

          <Floating $l={1} $t={-1} $w={276} $h={564}>
            <PanelBar />
            <PanelTabs><PanelTab>构件列表</PanelTab><PanelTab $on>图纸管理</PanelTab></PanelTabs>
            <PanelTools>
              <PanelTool $w={85}><Ico n="add" />添加图纸<Caret /></PanelTool>
              <PanelTool $w={63}><Ico n="cut" />分割<Caret /></PanelTool>
              <PanelTool $w={52}><Ico n="locate" />定位</PanelTool>
              <PanelTool $w={50}><Ico n="remove" />删除</PanelTool>
            </PanelTools>
            <TableArea $h={476}>
              <TableCol $w={251}>
                <Row $cols={cols1} $h={25}>
                  <HeadBlue $c>名称</HeadBlue><Cell $c $head>锁定</Cell><Cell $head>对应楼</Cell>
                </Row>
                {draw.map((d, i) => d.g ? (
                  <Row key={i} $cols={cols1}><GroupCell><Minus />{d.g}</GroupCell></Row>
                ) : (
                  <Row key={i} $cols={cols1}>
                    {d.sel ? <SelName>{d.n}</SelName> : <NameCell>{d.n}</NameCell>}
                    <Cell $c $sel={d.sel}><Ico n="padlock" s={14} /></Cell>
                    <Cell $sel={d.sel}>{d.f}</Cell>
                  </Row>
                ))}
              </TableCol>
              <Track $pt={78} $h={50} />
            </TableArea>
            <HScroll />
          </Floating>

          <Floating $l={1} $t={558} $w={286} $h={298}>
            <PanelBar />
            <PanelTabs><PanelTab $on>属性列表</PanelTab><PanelTab>图层管理</PanelTab></PanelTabs>
            <TableArea $h={253}>
              <TableCol $w={259}>
                <Row $cols="22px 101px 95px 41px">
                  <Cell $head /><Cell $c $head>属性名称</Cell><Cell $c $head>属性值</Cell><Cell $c $head>附加</Cell>
                </Row>
                {props.map((p, i) => (
                  <Row key={p.n} $cols="22px 101px 95px 41px">
                    <Cell $c $head>{i + 1}</Cell>
                    <Cell $link={p.link}>{p.n}</Cell>
                    <Cell>{p.v}</Cell>
                    <Cell $c>{p.box && <CheckBox />}</Cell>
                  </Row>
                ))}
              </TableCol>
              <Track $pt={15} $h={112} />
            </TableArea>
          </Floating>
        </Workspace>

        <Right>
          <RightInner>
            <BarStrip />
            <PaneTitle $h={21}>显示设置</PaneTitle>
            <DispTabs><DispTab $on>图元显示</DispTab><DispTab>楼层显示</DispTab></DispTabs>
            <DispWrap>
              <TableCol $w={248}>
                <Row $cols="122px 63px 63px">
                  <Cell $c $head>图层构件</Cell><Cell $c $head>显示图元</Cell><Cell $c $head>显示名称</Cell>
                </Row>
                {disp.map(([t, lv, s, n], i) => (
                  <Row key={i} $cols="122px 63px 63px">
                    <TreeCell $lv={lv}>{lv < 2 && <Minus />}{t}</TreeCell>
                    <Cell $c><CheckBox s={s} /></Cell>
                    <Cell $c><CheckBox s={n} /></Cell>
                  </Row>
                ))}
              </TableCol>
              <Track $pt={14} $h={188} />
            </DispWrap>
            <DispFoot><ResetBtn>恢复默认设置</ResetBtn></DispFoot>
          </RightInner>
          <Meter />
        </Right>
      </Main>

      <Status>
        <StatusText $w={263} $ml={2}>X  =  253582  Y  =  878142</StatusText>
        <StatusText $w={40}>层高:</StatusText>
        <StatusText $w={43}>2.9</StatusText>
        <StatusText $w={40}>标高:</StatusText>
        <StatusText $w={96}>21.05~23.95</StatusText>
        <StatusText $w={100}>0</StatusText>
        <StatusText $w={103}>隐藏:   0</StatusText>
        <StatusBtn $w={24} $ml={0}><Sm w={14} h={14}><path d="M2 1v11h11M2 8h4v4" fill="none" stroke="#333" /></Sm></StatusBtn>
        <StatusBtn $w={36} $ml={4}><Sm w={14} h={18}><rect x="1.500" y="3.500" width="11" height="13" fill="none" stroke="#333" /><rect x="0" y="1" width="4" height="4" fill="#d2d2d2" stroke="#333" /></Sm><Caret /></StatusBtn>
        <StatusBtn $w={24} $ml={6}><Sm><path d="M2 2l12 12M14 2L2 14" stroke="#888" /></Sm></StatusBtn>
        <StatusBtn $w={35} $ml={7}><Sm><path d="M1 14h14M2 14l10-10M4 9l3 5" fill="none" stroke="#333" /></Sm><Caret /></StatusBtn>
        <StatusBtn $w={36} $ml={4}><Sm><path d="M1 6h6M4 3v6" stroke="#333" /><rect x="7" y="10" width="8" height="4" fill="#333" /></Sm><Caret /></StatusBtn>
        <StatusBtn $w={73} $ml={3}>跨图层选择</StatusBtn>
        <StatusBtn $w={61} $ml={3}>折线选择</StatusBtn>
        <StatusText $w={400} $ml={5} $dark>按鼠标左键指定第一个角点，或拾取构件图元</StatusText>
        <Fps>166.667 FPS</Fps>
      </Status>

      <Taskbar>
        <WinStart>
          <Sm><path d="M0 2.500L7 1.500V7.500H0zM8 1.400L16 .2V7.500H8zM0 8.500H7V14.500L0 13.500zM8 8.500H16V15.800L8 14.600z" fill="#111" /></Sm>
        </WinStart>
        <TaskSearch>
          <Sm><circle cx="10" cy="6" r="5" fill="none" stroke="#333" strokeWidth="1.300" /><path d="M6 10l-5 5" stroke="#333" strokeWidth="1.300" /></Sm>
          在这里输入你要搜索的内容
        </TaskSearch>
        <TaskSlot $w={48}><Sm><circle cx="8" cy="8" r="6.500" fill="none" stroke="#111" strokeWidth="2" /></Sm></TaskSlot>
        <TaskSlot $w={48}><Sm><path d="M1 2h10M1 14h10" stroke="#111" /><rect x="1" y="5" width="10" height="6" fill="none" stroke="#111" /><rect x="13" y="3" width="2" height="2" fill="#111" /><rect x="13" y="7" width="2" height="2" fill="#111" /></Sm></TaskSlot>
        <TaskSlot $w={16}><Sm w={6} h={20}><path d="M1 0v20M4 0v20" stroke="#444" /></Sm></TaskSlot>
        <TaskSlot $w={40} $ml={11} $run><Sm w={24} h={24}><path d="M3 13C3 6 8 2 13 2c6 0 9 5 9 11H8c0 5 7 7 12 3v5c-8 3-17 0-17-8z M8 10h9c0-5-8-5-9 0z" fill="#0f78d4" fillRule="evenodd" /></Sm></TaskSlot>
        <TaskSlot $w={40} $ml={9} $run><Sm w={24} h={24}><rect width="24" height="24" rx="2" fill="#1a5fb0" /><rect x="2" y="2" width="20" height="4" fill="#888" /><rect x="2" y="18" width="20" height="4" fill="#888" /><text x="12" y="15" textAnchor="middle" fontSize="8.500" fill="#cfe4fa" fontFamily="Liberation Sans">CAD</text></Sm></TaskSlot>
        <TaskSlot $w={48} $ml={5} $run $hot><TLogo s={24} /></TaskSlot>
        <TaskSlot $w={40} $ml={5} $run><Sm w={24} h={24}><path d="M19 3c-7-3-16 1-17 9-1 7 4 11 9 11 6 0 10-5 9-10h-8v3h4c-1 3-6 4-8 1-2-4 1-10 8-10l3 1z" fill="#1b9be0" /></Sm></TaskSlot>
        <TaskSlot $w={40} $ml={9} $run><Sm w={24} h={24}><circle cx="12" cy="12" r="11" fill="#3a8fe8" /><path d="M16 6c-5-2-9 1-6 4 3 2 7 3 5 7-2 2-5 1-7 0" fill="none" stroke="#fff" strokeWidth="3" /></Sm></TaskSlot>
        <Tray>
          <TrayIcon $w={24}><Sm w={12} h={8}><path d="M1 7l5-5 5 5" fill="none" stroke="#222" strokeWidth="1.200" /></Sm></TrayIcon>
          <TrayIcon $w={24}><Sm w={16} h={18}><ellipse cx="8" cy="8" rx="5" ry="7" fill="#111" /><ellipse cx="8" cy="10" rx="3.500" ry="4" fill="#fff" /><path d="M2 11h12l-3 4H5z" fill="#e83fb0" /><path d="M3 17h4M9 17h4" stroke="#f0a020" strokeWidth="2" /></Sm></TrayIcon>
          <TrayIcon $w={24}><Sm w={16} h={12}><rect x="3" y="2" width="12" height="8" fill="none" stroke="#111" /><rect x="5" y="3.500" width="8" height="5" fill="#111" /><path d="M0 6h3" stroke="#111" /></Sm></TrayIcon>
          <TrayIcon $w={24}><Sm w={16} h={14}><path d="M1 5h3l4-4v12l-4-4H1z" fill="none" stroke="#222" /><path d="M10 4q2 3 0 6M12.500 2q3 5 0 10" fill="none" stroke="#999" /></Sm></TrayIcon>
          <TrayIcon $w={23}>中</TrayIcon>
          <TrayIcon $w={34}><Sm><rect x="1" y="1" width="14" height="14" rx="3" fill="#f04e14" transform="rotate(-8 8 8)" /><path d="M11 5c-4-2-7 0-5 2l4 2c2 2-2 3-5 1" fill="none" stroke="#fff" strokeWidth="2" /></Sm></TrayIcon>
          <Clock>14:44<br />2020/9/2</Clock>
          <TrayIcon $w={3} />
          <Notify><Sm w={18} h={16}><path d="M1 1h16v11H10l-2 3-1-3H1z" fill="none" stroke="#222" strokeWidth="1.200" /></Sm></Notify>
          <TrayIcon $w={4} />
        </Tray>
      </Taskbar>
    </Screen>
  );
}
